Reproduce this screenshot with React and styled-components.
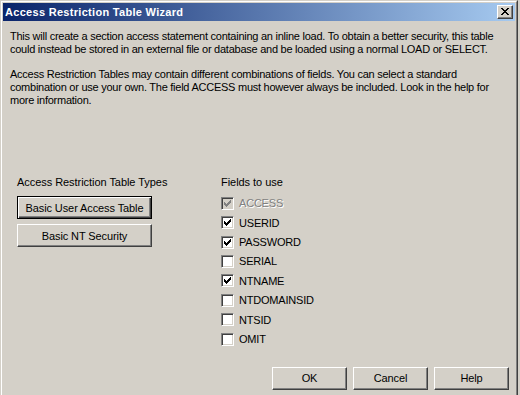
import React from "react";
import styled, { createGlobalStyle } from "styled-components";

const GlobalStyle = createGlobalStyle`
  html, body { margin: 0; padding: 0; background: #d4d0c8; overflow: hidden; }
  body {
    width: 520px; height: 395px;
    font-family: "Liberation Sans", Arial, sans-serif;
    -webkit-font-smoothing: none;
  }
`;

const Window = styled.div`
  width: 518px;
  height: 402px;
  box-sizing: border-box;
  background: #d4d0c8;
  border: 1px solid;
  border-color: #d4d0c8 #404040 #404040 #d4d0c8;
  display: flex;
  flex-direction: column;
`;

const Frame = styled.div`
  flex: 1;
  border: 1px solid;
  border-color: #ffffff #808080 #808080 #ffffff;
  padding: 1px;
  display: flex;
  flex-direction: column;
`;

const TitleBar = styled.div`
  height: 18px;
  flex: none;
  background: linear-gradient(to right, #0a246a, #a6caf0);
  display: flex;
  align-items: center;
  justify-content: space-between;
  padding: 0 2px;
`;

const Title = styled.span`
  color: #fff;
  font-weight: bold;
  font-size: 11px;
  letter-spacing: 0.3px;
  white-space: nowrap;
`;

const CloseButton = styled.div`
  width: 16px;
  height: 14px;
  box-sizing: border-box;
  background: #d4d0c8;
  border: 1px solid;
  border-color: #ffffff #404040 #404040 #ffffff;
  box-shadow: inset -1px -1px 0 #808080;
  display: flex;
  align-items: center;
  justify-content: center;
  padding: 0 1px 1px 0;
`;

const Content = styled.div`
  flex: 1;
  display: flex;
  flex-direction: column;
  padding: 9px 0 0 7px;
  font-size: 11px;
  color: #000;
`;

const Paragraph = styled.p`
  margin: ${(p) => (p.$first ? "0" : "12px 0 0")};
  line-height: 13px;
  white-space: nowrap;
  letter-spacing: -0.25px;
`;

const Columns = styled.div`
  display: flex;
  margin: 69px 0 0 7px;
`;

const LeftColumn = styled.div`
  width: 204px;
  display: flex;
  flex-direction: column;
`;

const RightColumn = styled.div`
  display: flex;
  flex-direction: column;
`;

const GroupLabel = styled.div`
  line-height: 13px;
  letter-spacing: -0.05px;
  white-space: nowrap;
`;

const PushButton = styled.button`
  width: ${(p) => p.$w}px;
  height: 23px;
  margin-top: ${(p) => p.$mt || 0}px;
  box-sizing: border-box;
  padding: 0;
  font-family: "Liberation Sans", Arial, sans-serif;
  font-size: 11px;
  letter-spacing: -0.1px;
  color: #000;
  background: #d4d0c8;
  border: 1px solid;
  border-color: ${(p) =>
    p.$default ? "#000" : "#ffffff #404040 #404040 #ffffff"};
  box-shadow: ${(p) =>
    p.$default
      ? "inset 1px 1px 0 #ffffff, inset -1px -1px 0 #404040, inset -2px -2px 0 #808080"
      : "inset -1px -1px 0 #808080"};
  outline: none;
  cursor: default;
`;

const FieldList = styled.div`
  margin-top: 4.6px;
  display: flex;
  flex-direction: column;
`;

const FieldRow = styled.label`
  height: 19.4px;
  display: flex;
  align-items: center;
  gap: 5px;
  white-space: nowrap;
  color: ${(p) => (p.$disabled ? "#808080" : "#000")};
  text-shadow: ${(p) => (p.$disabled ? "1px 1px 0 #ffffff" : "none")};
  letter-spacing: -0.2px;
`;

const Box = styled.span`
  width: 13px;
  height: 13px;
  box-sizing: border-box;
  flex: none;
  background: ${(p) => (p.$disabled ? "#d4d0c8" : "#ffffff")};
  border: 1px solid;
  border-color: #808080 #ffffff #ffffff #808080;
  box-shadow: inset 1px 1px 0 #404040, inset -1px -1px 0 #d4d0c8;
  display: flex;
  align-items: center;
  justify-content: center;
`;

const ButtonRow = styled.div`
  display: flex;
  justify-content: flex-end;
  gap: 6px;
  margin-top: 18px;
  padding-right: 6px;
`;

const CHECK = [
  "......X",
  ".....XX",
  "X...XXX",
  "XX.XXX.",
  "XXXXX..",
  ".XXX...",
  "..X....",
];

const CROSS = [
  "XX....XX",
  ".XX..XX.",
  "..XXXX..",
  "...XX...",
  "..XXXX..",
  ".XX..XX.",
  "XX....XX",
];

function PixelIcon({ rows, color }) {
  const w = rows[0].length;
  const h = rows.length;
  const rects = [];
  rows.forEach((r, y) =>
    r.split("").forEach((c, x) => {
      if (c === "X") rects.push(<rect key={`${x}-${y}`} x={x} y={y} width="1" height="1" />);
    })
  );
  return (
    <svg width={w} height={h} viewBox={`0 0 ${w} ${h}`} fill={color} shapeRendering="crispEdges">
      {rects}
    </svg>
  );
}

const fields = [
  { name: "ACCESS", checked: true, disabled: true },
  { name: "USERID", checked: true },
  { name: "PASSWORD", checked: true },
  { name: "SERIAL", checked: false },
  { name: "NTNAME", checked: true },
  { name: "NTDOMAINSID", checked: false },
  { name: "NTSID", checked: false },
  { name: "OMIT", checked: false },
];

export default function App() {
  return (
    <>
      <GlobalStyle />
      <Window>
        <Frame>
          <TitleBar>
            <Title>Access Restriction Table Wizard</Title>
            <CloseButton>
              <PixelIcon rows={CROSS} color="#000" />
            </CloseButton>
          </TitleBar>
          <Content>
            <Paragraph $first>
              This will create a section access statement containing an inline load. To obtain a better security, this table
              <br />
              could instead be stored in an external file or database and be loaded using a normal LOAD or SELECT.
            </Paragraph>
            <Paragraph>
              Access Restriction Tables may contain different combinations of fields. You can select a standard
              <br />
              combination or use your own. The field ACCESS must however always be included. Look in the help for
              <br />
              more information.
            </Paragraph>
            <Columns>
              <LeftColumn>
                <GroupLabel>Access Restriction Table Types</GroupLabel>
                <PushButton $w={135} $mt={7} $default>
                  Basic User Access Table
                </PushButton>
                <PushButton $w={135} $mt={5}>
                  Basic NT Security
                </PushButton>
              </LeftColumn>
              <RightColumn>
                <GroupLabel>Fields to use</GroupLabel>
                <FieldList>
                  {fields.map((f) => (
                    <FieldRow key={f.name} $disabled={f.disabled}>
                      <Box $disabled={f.disabled}>
                        {f.checked && (
                          <PixelIcon rows={CHECK} color={f.disabled ? "#808080" : "#000"} />
                        )}
                      </Box>
                      {f.name}
                    </FieldRow>
                  ))}
                </FieldList>
              </RightColumn>
            </Columns>
            <ButtonRow>
              <PushButton $w={75}>OK</PushButton>
              <PushButton $w={75}>Cancel</PushButton>
              <PushButton $w={75}>Help</PushButton>
            </ButtonRow>
          </Content>
        </Frame>
      </Window>
    </>
  );
}
